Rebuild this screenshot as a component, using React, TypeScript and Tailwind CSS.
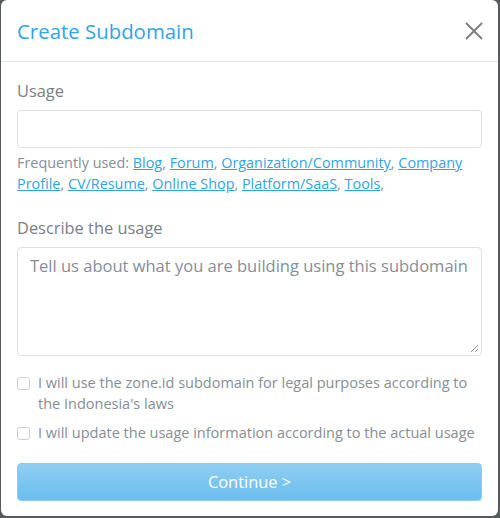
const usages = ['Blog', 'Forum', 'Organization/Community', 'Company Profile', 'CV/Resume', 'Online Shop', 'Platform/SaaS', 'Tools']

function Check({ children }: { children: React.ReactNode }) {
  return (
    <label className="flex gap-2 text-[14.5px] leading-[21px] text-[#868e96]">
      <span className="mt-[5px] h-[13px] w-[13px] shrink-0 rounded-[3px] border border-[#ccd0d5] bg-white" />
      <span>{children}</span>
    </label>
  )
}

export default function App() {
  return (
    <div className="h-[518px] w-[500px] bg-[#555a5d] font-['Open_Sans',sans-serif]">
      <div className="ml-px flex h-[516px] w-[497px] flex-col rounded-[6px] bg-white">
        {/* header */}
        <div className="flex h-[62px] items-center justify-between border-b border-[#e2e5ea] px-4">
          <h1 className="text-[20.4px] leading-[30px] text-[#2fa4e7]">Create Subdomain</h1>
          <svg className="-mr-[1px]" width="18" height="18" viewBox="0 0 18 18">
            <path d="M1 1L17 17M17 1L1 17" stroke="#7b7b7b" strokeWidth="1.8" />
          </svg>
        </div>

        {/* body */}
        <div className="flex flex-1 flex-col px-4 pt-4">
          <div className="pt-[2px] text-[16.4px] leading-[22px] text-[#7a8087]">Usage</div>
          <div className="mt-2 h-[38px] rounded-[4px] border border-[#dcdfe4]" />
          <p className="mt-1 text-[14.4px] leading-[21px] text-[#868e96]">
            Frequently used:{' '}
            {usages.map((u) => (
              <span key={u}>
                <a className="text-[#2fa4e7] underline">{u}</a>,{' '}
              </span>
            ))}
          </p>

          <div className="mt-[21px] pt-[2px] text-[16.4px] leading-[22px] text-[#7a8087]">Describe the usage</div>
          <div className="relative mt-2 h-[109px] rounded-[4px] border border-[#dcdfe4] px-3 py-1.5 text-[16.5px] leading-[24px] text-[#868e96]">
            Tell us about what you are building using this subdomain
            <svg className="absolute bottom-[2px] right-[2px]" width="9" height="9" viewBox="0 0 9 9">
              <path d="M8 1L1 8M8 5L5 8" stroke="#999" strokeWidth="1" />
            </svg>
          </div>

          <div className="mt-4 flex flex-col gap-2">
            <Check>I will use the zone.id subdomain for legal purposes according to the Indonesia's laws</Check>
            <Check>I will update the usage information according to the actual usage</Check>
          </div>

          <button className="mt-5 h-[38px] rounded-[4px] border border-[#8ccbf0] bg-[linear-gradient(#90cef2,#78c4ef_60%,#6cbeee)] text-[16.4px] text-white">
            Continue &gt;
          </button>
        </div>
      </div>
    </div>
  )
}
